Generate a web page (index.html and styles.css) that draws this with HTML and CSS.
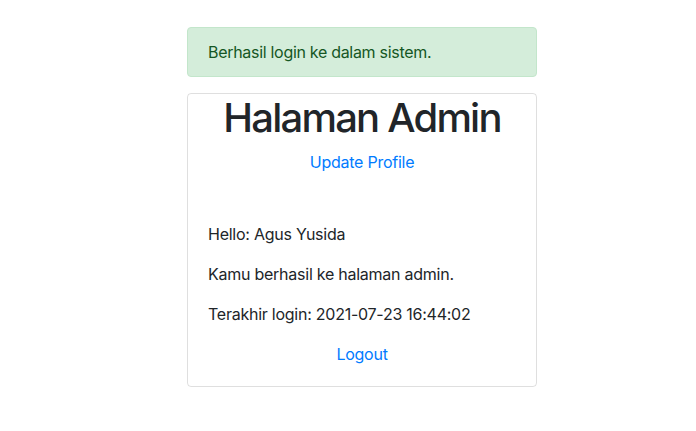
FILE: index.html
```html
<!DOCTYPE html>
<html>
<head>
<meta charset="utf-8">
<link rel="stylesheet" href="styles.css">
</head>
<body>
<div class="wrap">
  <div class="alert">Berhasil login ke dalam sistem.</div>
  <div class="card">
    <h1 class="title">Halaman Admin</h1>
    <a class="link center" href="#">Update Profile</a>
    <div class="body">
      <p>Hello: Agus Yusida</p>
      <p>Kamu berhasil ke halaman admin.</p>
      <p>Terakhir login: 2021-07-23 16:44:02</p>
      <a class="link center" href="#">Logout</a>
    </div>
  </div>
</div>
</body>
</html>
```
FILE: styles.css
```css
html, body { margin: 0; padding: 0; background: #fff; }
body {
  font-family: Inter, "Liberation Sans", sans-serif;
  font-size: 16px;
  line-height: 1.5;
  color: #212529;
  letter-spacing: -0.25px;
}
.wrap {
  width: 350px;
  margin-left: 187px;
  padding-top: 27px;
}
.alert {
  box-sizing: border-box;
  height: 50px;
  padding: 12px 20px;
  background: #d4edda;
  border: 1px solid #c3e6cb;
  border-radius: 4px;
  color: #155724;
  margin-bottom: 16px;
  letter-spacing: -0.3px;
}
.card {
  border: 1px solid rgba(0,0,0,.125);
  border-radius: 4px;
  padding: 0 20px 20px;
  display: flex;
  flex-direction: column;
}
.title {
  margin: 0 0 8px;
  font-size: 40px;
  font-weight: 500;
  line-height: 48px;
  letter-spacing: -1.8px;
  text-align: center;
}
.link {
  color: #007bff;
  text-decoration: none;
}
.center { text-align: center; display: block; }
.body { padding-top: 48px; }
.body p { margin: 0 0 16px; }
```
